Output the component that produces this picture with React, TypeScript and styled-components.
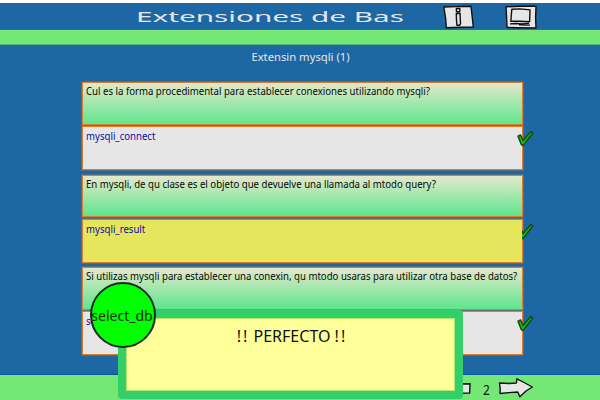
import React from "react";
import styled, { createGlobalStyle } from "styled-components";

const GlobalStyle = createGlobalStyle`
  * { box-sizing: border-box; }
  body {
    margin: 0;
    background: #fff;
    font-family: "Noto Sans", "Open Sans", sans-serif;
    overflow: hidden;
  }
`;

const Screen = styled.div`
  position: relative;
  width: 600px;
  height: 400px;
  padding-top: 3px;
  display: flex;
  flex-direction: column;
  background: #fff;
  overflow: hidden;
`;

const Header = styled.header`
  display: flex;
  flex: none;
  height: 27px;
  padding-left: 136px;
  background: #1d68a4;
  border-bottom: 1px solid #247987;
`;

const Title = styled.h1`
  flex: none;
  width: 307px;
  margin: 4px 0 0;
  font-size: 13.5px;
  line-height: 20px;
  font-weight: 400;
  color: #e6e6e6;
  white-space: nowrap;
  transform: scaleX(2.2);
  transform-origin: left center;
`;

const HeaderIcons = styled.div`
  display: flex;
  gap: 30px;
  margin-top: 2px;
`;

const Stripe = styled.div`
  flex: none;
  height: 15px;
  background: #75e775;
  border-bottom: 1px solid #55b783;
`;

const Main = styled.main`
  flex: none;
  height: 330px;
  background: #1d68a4;
  border-bottom: 1px solid #0755a9;
`;

const Subtitle = styled.h2`
  height: 37px;
  margin: 0;
  padding: 3px 0 0 1px;
  font-size: 11.25px;
  line-height: 17px;
  font-weight: 400;
  color: #e6e6e6;
  text-align: center;
`;

const Questions = styled.div`
  display: flex;
  flex-direction: column;
  gap: 4.6px;
  width: 441px;
  margin-left: 82px;
`;

const Card = styled.section`
  display: flex;
  flex-direction: column;
  gap: 1.5px;
  height: 88px;
`;

const Box = styled.div`
  border: 1px solid #dc7d2b;
  box-shadow: 0 0 0 0.5px #8e7257;
  font-size: 10px;
  line-height: 14px;
  white-space: nowrap;
`;

const Question = styled(Box)`
  height: 42.5px;
  padding: 1px 3px 0;
  color: #080808;
  background: linear-gradient(#e4e8cb, #5fe68e);
`;

const Answer = styled(Box)<{ $selected?: boolean }>`
  position: relative;
  height: 44px;
  padding: 2px 2.5px 0;
  color: #0c0ca8;
  background: ${(p) => (p.$selected ? "#e6e65c" : "#e6e6e6")};
`;

const Label = styled.span`
  display: inline-block;
  transform: scaleX(0.961);
  transform-origin: left center;
`;

const CheckMark = styled.svg<{ $behind?: boolean }>`
  position: absolute;
  right: -12px;
  top: 3px;
  width: 17px;
  height: 18px;
  clip-path: ${(p) => (p.$behind ? "inset(0 0 0 5px)" : "none")};
`;

const Footer = styled.footer`
  display: flex;
  flex: none;
  height: 25px;
  padding-left: 438px;
  background: #75e775;
`;

const PageNumber = styled.span`
  width: 15px;
  margin-left: 10.5px;
  padding-top: 6px;
  font-size: 14px;
  line-height: 18px;
  color: #111;
  transform: scaleX(0.85);
  transform-origin: left center;
`;

const Popup = styled.div`
  position: absolute;
  left: 118px;
  top: 310px;
  width: 345px;
  height: 89px;
  padding-top: 6px;
  border: 8px solid #34cf69;
  border-radius: 4px;
  background: #ffff99;
  box-shadow: inset 0 0 0 1px #b5e86f;
  font-size: 16px;
  line-height: 24px;
  color: #111;
  text-align: center;
`;

const PopupText = styled.p`
  margin: 0;
  padding-left: 3px;
  font-variant-ligatures: none;
`;

const Bangs = styled.span`
  letter-spacing: 2px;
`;

const Bubble = styled.div`
  position: absolute;
  left: 90px;
  top: 282px;
  width: 66px;
  height: 66px;
  display: flex;
  align-items: center;
  justify-content: center;
  padding: 1px 2px 0 0;
  border: 2px solid #25252d;
  border-radius: 50%;
  background: #00ff00;
  color: #073007;
  font-size: 14px;
  white-space: nowrap;
`;

const InfoIcon = () => (
  <svg width="32" height="25" viewBox="0 0 32 25" fill="#e6e6e6" stroke="#101010" strokeWidth="1.4" strokeLinejoin="round">
    <path d="M.8 2 L13 1.6 L28 1.3 L29 10 L30.3 22 L17 22.3 L3.3 22.7 L2.6 13 Z" />
    <path d="M13.4 3.5h3.4v3.2h-3.4z" fill="none" />
    <path d="M13.3 8.5l3.7-.3.5 10.7-1 1.3h-2.6l-.4-5z" fill="none" />
  </svg>
);

const ScreenIcon = () => (
  <svg width="32" height="25" viewBox="0 0 32 25" fill="#e6e6e6" stroke="#101010" strokeWidth="1.4" strokeLinejoin="round">
    <path d="M1 1.8 L15 1.3 L31 1.3 L30.6 13 L31 23 L12 22.7 L2 22.5 L1.6 12 Z" />
    <path d="M6.8 4.2l8-.3 10.2 1-.4 11.8-10-.5-8.8.1z" fill="none" />
    <path d="M5 18.9l6-.4 6 .4 7-.5M14 19.7l11 .4" fill="none" />
  </svg>
);

const Check = ({ behind }: { behind?: boolean }) => (
  <CheckMark $behind={behind} viewBox="0 0 17 18">
    <path d="M1 6.2 L3.6 5 L6 10.5 L14 1.6 L15.9 3 L12 7.8 L6 15.6 L4.4 14.6 Z" fill="#10c810" stroke="#1b480c" strokeWidth="1.5" strokeLinejoin="round" />
  </CheckMark>
);

const PreviousArrow = () => (
  <svg width="34" height="25" viewBox="0 0 34 25">
    <path d="M1 13 L16 4 L16 9 L32 8.8 L31.6 18 L16 18.2 L16 22 Z" fill="#e6e6e6" stroke="#101010" strokeWidth="1.4" />
  </svg>
);

const NextArrow = () => (
  <svg width="36" height="25" viewBox="0 0 36 25">
    <path d="M1.5 8 L11 8.5 L18.4 8 L18.9 3.8 L26 7.5 L34.3 12 L28 16 L21.8 21.8 L19.8 17 L11 17.6 L2 18.5 L2.2 14 Z" fill="#e6e6e6" stroke="#101010" strokeWidth="1.4" strokeLinejoin="round" />
  </svg>
);

const items = [
  { question: "Cul es la forma procedimental para establecer conexiones utilizando mysqli?", answer: "mysqli_connect" },
  { question: "En mysqli, de qu clase es el objeto que devuelve una llamada al mtodo query?", answer: "mysqli_result", selected: true },
  { question: "Si utilizas mysqli para establecer una conexin, qu mtodo usaras para utilizar otra base de datos?", answer: "select_db" },
];

export default function App() {
  return (
    <>
      <GlobalStyle />
      <Screen>
        <Header>
          <Title>Extensiones de Bas</Title>
          <HeaderIcons>
            <InfoIcon />
            <ScreenIcon />
          </HeaderIcons>
        </Header>
        <Stripe />
        <Main>
          <Subtitle>Extensin mysqli (1)</Subtitle>
          <Questions>
            {items.map((item) => (
              <Card key={item.answer}>
                <Question>
                  <Label>{item.question}</Label>
                </Question>
                <Answer $selected={item.selected}>
                  <Label>{item.answer}</Label>
                  <Check behind={item.selected} />
                </Answer>
              </Card>
            ))}
          </Questions>
        </Main>
        <Footer>
          <PreviousArrow />
          <PageNumber>2</PageNumber>
          <NextArrow />
        </Footer>
        <Popup>
          <PopupText>
            <Bangs>!!</Bangs> PERFECTO <Bangs>!!</Bangs>
          </PopupText>
        </Popup>
        <Bubble>select_db</Bubble>
      </Screen>
    </>
  );
}
